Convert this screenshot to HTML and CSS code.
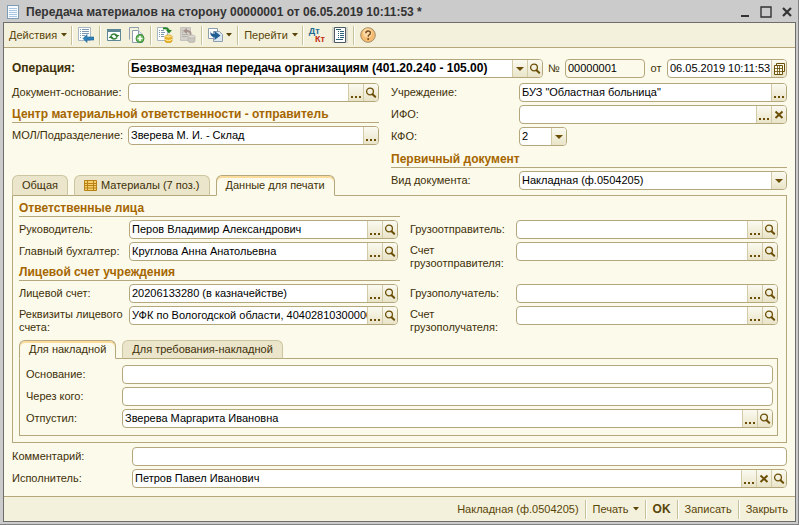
FILE: index.html
```html
<!DOCTYPE html>
<html lang="ru">
<head>
  <meta charset="UTF-8" />
  <meta name="viewport" content="width=device-width, initial-scale=1.0"/>
  <title>Передача материалов на сторону</title>
  <link rel="stylesheet" href="styles.css">
</head>
<body>
  <!-- shared glyphs for field buttons -->
  <svg class="sprite" aria-hidden="true">
    <symbol id="i-lens" viewBox="0 0 12 12">
      <circle cx="5" cy="4.5" r="3.4" fill="none" stroke="#6b4f08" stroke-width="1.3"/>
      <path d="M7.5 7.2 L10.2 9.8" stroke="#6b4f08" stroke-width="2" stroke-linecap="round"/>
    </symbol>
    <symbol id="i-dots" viewBox="0 0 12 12">
      <path d="M1 9h2v2H1zM5 9h2v2H5zM9 9h2v2H9z" fill="#6b4f08"/>
    </symbol>
    <symbol id="i-clear" viewBox="0 0 12 12">
      <path d="M2.5 2.5 L9.5 9 M9.5 2.5 L2.5 9" stroke="#6b4f08" stroke-width="2"/>
    </symbol>
    <symbol id="i-drop" viewBox="0 0 12 12">
      <path d="M2 4h8L6 8z" fill="#6b4f08"/>
    </symbol>
    <symbol id="i-calendar" viewBox="0 0 12 12">
      <path d="M3.5 .5h8v8h-8z" fill="#fcfaeb" stroke="#6b4f08"/>
      <path d="M1.5 2.5h8v9h-8z" fill="#fcfaeb" stroke="#6b4f08"/>
      <path d="M1.5 5.5h8M1.5 8.5h8M4.5 2.5v9M6.5 2.5v9" stroke="#6b4f08" stroke-width=".8"/>
    </symbol>
    <symbol id="i-caret" viewBox="0 0 6 4">
      <path d="M0 0h6L3 3.5z" fill="#5a4508"/>
    </symbol>
  </svg>

  <div class="window">
    <header class="titlebar">
      <svg class="doc" width="14" height="14" viewBox="0 0 14 14">
        <rect x="1.5" y=".5" width="11" height="13" fill="#f7fbff" stroke="#7f9cb5"/>
        <path d="M3 3.5h8M3 5.5h8M3 7.5h8M3 9.5h8M3 11.5h8" stroke="#a9c7e2"/>
      </svg>
      <h1>Передача материалов на сторону 00000001 от 06.05.2019 10:11:53 *</h1>
      <div class="win-controls">
        <button aria-label="Свернуть"><svg width="10" height="12" viewBox="0 0 10 12"><path d="M1 10h8" stroke="#333" stroke-width="2"/></svg></button>
        <button aria-label="Развернуть"><svg width="12" height="12" viewBox="0 0 12 12"><path d="M1 1h10v10H1z" fill="none" stroke="#333" stroke-width="1.4"/></svg></button>
        <button aria-label="Закрыть окно"><svg width="10" height="12" viewBox="0 0 10 12"><path d="M1 2 L9 10 M9 2 L1 10" stroke="#333" stroke-width="2.2"/></svg></button>
      </div>
    </header>

    <div class="frame">
      <nav class="toolbar">
        <button>Действия <svg class="caret"><use href="#i-caret"/></svg></button>
        <span class="sep"></span>
        <button class="tool" aria-label="Перейти к списку">
          <svg width="16" height="16" viewBox="0 0 16 16">
            <path d="M.5 .5h12v13H.5z" fill="#fff" stroke="#a9b8c4"/>
            <path d="M2 2.5h1M4 2.5h7M2 4.5h1M4 4.5h7M2 6.5h1M4 6.5h7M2 8.5h1M4 8.5h3M2 10.5h1" stroke="#7f98ad"/>
            <path d="M5 11.5l4-4V10h7v3H9v2.5z" fill="#2f7fb8" stroke="#1f6497" stroke-width=".6"/>
          </svg>
        </button>
        <span class="sep"></span>
        <button class="tool" aria-label="Перечитать">
          <svg width="16" height="16" viewBox="0 0 16 16">
            <path d="M1.5 2.5h13v11h-13z" fill="#fbfdff" stroke="#5d8795"/>
            <path d="M1 2h14v3H1z" fill="#5d8795"/>
            <path d="M5 8.5q3-3 6 0M11 10.5q-3 3-6 0" fill="none" stroke="#2f7d2f" stroke-width="1.6"/>
            <path d="M8.5 8h5L11 10.5zM2.5 11h5L5 8.5z" fill="#2f7d2f"/>
          </svg>
        </button>
        <button class="tool" aria-label="Скопировать">
          <svg width="16" height="16" viewBox="0 0 16 16">
            <path d="M.5 12.5V.5h9v2" fill="none" stroke="#8d9fae"/>
            <path d="M3.5 3.5h6l4 4v8h-10z" fill="#fff" stroke="#8d9fae"/>
            <path d="M9.5 3.5v4h4" fill="#dde7ee" stroke="#8d9fae"/>
            <circle cx="11" cy="11.5" r="4" fill="#6fbb62" stroke="#3b8a38"/>
            <path d="M11 9v5M8.5 11.5h5" stroke="#fff" stroke-width="1.6"/>
          </svg>
        </button>
        <span class="sep"></span>
        <button class="tool" aria-label="Провести">
          <svg width="16" height="16" viewBox="0 0 16 16">
            <path d="M.5 .5h10v13H.5z" fill="#fff" stroke="#a9b8c4"/>
            <path d="M2 3.5h1M4 3.5h3M2 5.5h1M4 5.5h4M2 7.5h1M4 7.5h3M2 9.5h1M4 9.5h3" stroke="#7f98ad"/>
            <path d="M6 1.500q5-1 6 2.500" fill="none" stroke="#27862b" stroke-width="1.8"/>
            <path d="M9 3h6l-3 3.5z" fill="#27862b"/>
            <path d="M8 9.5v4.500a3.500 1.500 0 0 0 7 0V9.500z" fill="#f0b729" stroke="#c98a12" stroke-width=".7"/>
            <path d="M8 12a3.500 1.500 0 0 0 7 0" fill="none" stroke="#fff0a8"/>
            <ellipse cx="11.5" cy="9.5" rx="3.5" ry="1.5" fill="#ffe37a" stroke="#d59a1b" stroke-width=".7"/>
          </svg>
        </button>
        <button class="tool" aria-label="Отменить проведение" disabled>
          <svg width="16" height="16" viewBox="0 0 16 16">
            <path d="M.5 .5h10v13H.5z" fill="#d3d0ca" stroke="#c6c3bc"/>
            <path d="M2 3.5h1M2 5.5h1M2 7.5h6M2 9.5h5" stroke="#b5b2ab"/>
            <path d="M10.5 8q1-4-4-4" fill="none" stroke="#a6938e" stroke-width="1.8"/>
            <path d="M7 1v6L3 4z" fill="#a6938e"/>
            <path d="M8 9.500v4.500a3.500 1.500 0 0 0 7 0V9.500z" fill="#c9c6be" stroke="#b3b0a8" stroke-width=".7"/>
            <ellipse cx="11.5" cy="9.5" rx="3.5" ry="1.5" fill="#dedbd4" stroke="#b3b0a8" stroke-width=".7"/>
          </svg>
        </button>
        <span class="sep"></span>
        <button class="tool with-caret" aria-label="Ввести на основании">
          <svg width="16" height="16" viewBox="0 0 16 16">
            <path d="M.5 1.5h9v10h-9z" fill="#fff" stroke="#8d9fae"/>
            <path d="M5.5 4.5h6l3 3v7h-9z" fill="#dbe7f1" stroke="#8d9fae"/>
            <path d="M2.500 4q0 3 4 3V4l6 4.500-6 4.500v-3q-5 0-4-6z" fill="#1f5f92"/>
          </svg>
          <svg class="caret"><use href="#i-caret"/></svg>
        </button>
        <span class="sep"></span>
        <button>Перейти <svg class="caret"><use href="#i-caret"/></svg></button>
        <span class="sep"></span>
        <button class="tool dtkt" aria-label="Дебет, кредит"><span class="dt">Дт</span><span class="kt">Кт</span></button>
        <button class="tool pressed" aria-label="Структура">
          <svg width="16" height="16" viewBox="0 0 16 16">
            <path d="M2.5 .5h11v15h-11z" fill="#fff" stroke="#4b5a66"/>
            <path d="M4 2.5h5M6 4.5h1M8 4.5h4M6 6.5h1M8 6.5h4M6 8.5h1M8 8.5h4M6 10.5h1M8 10.5h4M4 12.5h7" stroke="#2c6076"/>
          </svg>
        </button>
        <span class="sep"></span>
        <button class="tool" aria-label="Справка">
          <svg width="16" height="16" viewBox="0 0 16 16">
            <circle cx="8" cy="8" r="7.3" fill="#f6bd72" stroke="#a58c66"/>
            <circle cx="7.5" cy="6" r="4.5" fill="#fbd9a4"/>
            <path d="M5.8 6.3q0-2.3 2.3-2.3t2.3 1.9q0 1.2-1.2 1.9Q8.2 8.5 8.2 9.8" fill="none" stroke="#7a4b1c" stroke-width="1.4"/>
            <circle cx="8.2" cy="12" r="1" fill="#7a4b1c"/>
          </svg>
        </button>
      </nav>

      <main class="form">
        <div class="row operation">
          <label class="strong" for="operation">Операция:</label>
          <div class="field grow">
            <select id="operation" class="strong"><option>Безвозмездная передача организациям (401.20.240 - 105.00)</option></select>
            <span class="drop"><svg><use href="#i-drop"/></svg></span>
            <button aria-label="Открыть"><svg><use href="#i-lens"/></svg></button>
          </div>
          <label for="number">№</label>
          <div class="field number"><input id="number" type="text" value="00000001" readonly></div>
          <label for="date">от</label>
          <div class="field date">
            <input id="date" type="text" value="06.05.2019 10:11:53">
            <button aria-label="Выбрать дату"><svg><use href="#i-calendar"/></svg></button>
          </div>
        </div>

        <div class="head">
          <div class="head-left">
            <div class="row">
              <label for="base">Документ-основание:</label>
              <div class="field grow">
                <input id="base" type="text">
                <button aria-label="Выбрать"><svg><use href="#i-dots"/></svg></button>
                <button aria-label="Открыть"><svg><use href="#i-lens"/></svg></button>
              </div>
            </div>
            <h2>Центр материальной ответственности - отправитель</h2>
            <div class="row">
              <label for="mol">МОЛ/Подразделение:</label>
              <div class="field grow">
                <input id="mol" type="text" value="Зверева М. И. - Склад">
                <button aria-label="Выбрать"><svg><use href="#i-dots"/></svg></button>
              </div>
            </div>
            <div class="tabs">
              <button class="tab">Общая</button>
              <button class="tab">
                <svg width="13" height="11" viewBox="0 0 13 11">
                  <path d="M.5 .5h12v10H.5z" fill="#f6cf6a" stroke="#b98216"/>
                  <path d="M.5 3.5h12M.5 5.5h12M.5 8h12M3.5 .5v10M9.5 .5v10" stroke="#b98216"/>
                </svg>
                Материалы (7 поз.)
              </button>
              <button class="tab active">Данные для печати</button>
            </div>
          </div>

          <div class="head-right">
            <div class="row">
              <label for="org">Учреждение:</label>
              <div class="field grow">
                <input id="org" type="text" value='БУЗ "Областная больница"'>
                <button aria-label="Выбрать"><svg><use href="#i-dots"/></svg></button>
              </div>
            </div>
            <div class="row">
              <label for="ifo">ИФО:</label>
              <div class="field grow">
                <input id="ifo" type="text">
                <button aria-label="Выбрать"><svg><use href="#i-dots"/></svg></button>
                <button aria-label="Очистить"><svg><use href="#i-clear"/></svg></button>
              </div>
            </div>
            <div class="row">
              <label for="kfo">КФО:</label>
              <div class="field kfo">
                <select id="kfo"><option>2</option></select>
                <span class="drop"><svg><use href="#i-drop"/></svg></span>
              </div>
            </div>
            <h2>Первичный документ</h2>
            <div class="row">
              <label for="kind">Вид документа:</label>
              <div class="field grow">
                <select id="kind"><option>Накладная (ф.0504205)</option></select>
                <span class="drop"><svg><use href="#i-drop"/></svg></span>
              </div>
            </div>
          </div>
        </div>

        <section class="panel">
          <div class="print-data">
            <h2>Ответственные лица</h2>
            <div class="row left">
              <label for="chief">Руководитель:</label>
              <div class="field grow">
                <input id="chief" type="text" value="Перов Владимир Александрович">
                <button aria-label="Выбрать"><svg><use href="#i-dots"/></svg></button>
                <button aria-label="Открыть"><svg><use href="#i-lens"/></svg></button>
              </div>
            </div>
            <div class="row">
              <label for="sender">Грузоотправитель:</label>
              <div class="field grow">
                <input id="sender" type="text">
                <button aria-label="Выбрать"><svg><use href="#i-dots"/></svg></button>
                <button aria-label="Открыть"><svg><use href="#i-lens"/></svg></button>
              </div>
            </div>
            <div class="row left">
              <label for="accountant">Главный бухгалтер:</label>
              <div class="field grow">
                <input id="accountant" type="text" value="Круглова Анна Анатольевна">
                <button aria-label="Выбрать"><svg><use href="#i-dots"/></svg></button>
                <button aria-label="Открыть"><svg><use href="#i-lens"/></svg></button>
              </div>
            </div>
            <div class="row">
              <label class="two-line" for="sender-acc">Счет грузоотправителя:</label>
              <div class="field grow">
                <input id="sender-acc" type="text">
                <button aria-label="Выбрать"><svg><use href="#i-dots"/></svg></button>
                <button aria-label="Открыть"><svg><use href="#i-lens"/></svg></button>
              </div>
            </div>
            <h2>Лицевой счет учреждения</h2>
            <div class="row left">
              <label for="account">Лицевой счет:</label>
              <div class="field grow">
                <input id="account" type="text" value="20206133280 (в казначействе)">
                <button aria-label="Выбрать"><svg><use href="#i-dots"/></svg></button>
                <button aria-label="Открыть"><svg><use href="#i-lens"/></svg></button>
              </div>
            </div>
            <div class="row">
              <label for="receiver">Грузополучатель:</label>
              <div class="field grow">
                <input id="receiver" type="text">
                <button aria-label="Выбрать"><svg><use href="#i-dots"/></svg></button>
                <button aria-label="Открыть"><svg><use href="#i-lens"/></svg></button>
              </div>
            </div>
            <div class="row left">
              <label class="two-line" for="details">Реквизиты лицевого счета:</label>
              <div class="field grow">
                <input id="details" type="text" value="УФК по Вологодской области, 40402810300000000001">
                <button aria-label="Выбрать"><svg><use href="#i-dots"/></svg></button>
                <button aria-label="Открыть"><svg><use href="#i-lens"/></svg></button>
              </div>
            </div>
            <div class="row">
              <label class="two-line" for="receiver-acc">Счет грузополучателя:</label>
              <div class="field grow">
                <input id="receiver-acc" type="text">
                <button aria-label="Выбрать"><svg><use href="#i-dots"/></svg></button>
                <button aria-label="Открыть"><svg><use href="#i-lens"/></svg></button>
              </div>
            </div>
          </div>

          <div class="tabs inner-tabs">
            <button class="tab active">Для накладной</button>
            <button class="tab">Для требования-накладной</button>
          </div>
          <div class="panel inner">
            <div class="row">
              <label for="reason">Основание:</label>
              <div class="field grow"><input id="reason" type="text"></div>
            </div>
            <div class="row">
              <label for="through">Через кого:</label>
              <div class="field grow"><input id="through" type="text"></div>
            </div>
            <div class="row">
              <label for="released">Отпустил:</label>
              <div class="field grow">
                <input id="released" type="text" value="Зверева Маргарита Ивановна">
                <button aria-label="Выбрать"><svg><use href="#i-dots"/></svg></button>
                <button aria-label="Открыть"><svg><use href="#i-lens"/></svg></button>
              </div>
            </div>
          </div>
        </section>

        <div class="bottom">
          <div class="row">
            <label for="comment">Комментарий:</label>
            <div class="field grow"><input id="comment" type="text"></div>
          </div>
          <div class="row">
            <label for="executor">Исполнитель:</label>
            <div class="field grow">
              <input id="executor" type="text" value="Петров Павел Иванович">
              <button aria-label="Выбрать"><svg><use href="#i-dots"/></svg></button>
              <button aria-label="Очистить"><svg><use href="#i-clear"/></svg></button>
              <button aria-label="Открыть"><svg><use href="#i-lens"/></svg></button>
            </div>
          </div>
        </div>
      </main>

      <footer class="actions">
        <button>Накладная (ф.0504205)</button>
        <span class="sep"></span>
        <button>Печать <svg class="caret"><use href="#i-caret"/></svg></button>
        <span class="sep"></span>
        <button class="ok">OK</button>
        <span class="sep"></span>
        <button>Записать</button>
        <span class="sep"></span>
        <button>Закрыть</button>
      </footer>
    </div>
  </div>
</body>
</html>
```
FILE: styles.css
```css
* {
  box-sizing: border-box;
}

body {
  margin: 0;
  font-family: "Liberation Sans", Arial, sans-serif;
  font-size: 11px;
  line-height: 13px;
  color: #403008;
}

button, input, select {
  font: inherit;
  color: inherit;
  margin: 0;
  padding: 0;
  border: none;
  background: none;
}

.sprite {
  position: absolute;
  width: 0;
  height: 0;
}

.window {
  display: flex;
  flex-direction: column;
  min-height: 100vh;
  padding: 0 2px 2px 3px;
  background: #cbcbcb;
  border-right: 1px solid #808080;
  border-bottom: 1px solid #808080;
}

.titlebar {
  display: flex;
  align-items: center;
  height: 22px;
  padding: 2px 4px 0 3px;
}

h1 {
  flex: 1;
  margin: 0 0 0 6px;
  font-size: 12px;
  color: #333;
  white-space: nowrap;
}

.win-controls {
  display: flex;
  gap: 10px;
}

.win-controls button, .toolbar button, .actions button {
  display: flex;
  align-items: center;
}

.frame {
  flex: 1;
  display: flex;
  flex-direction: column;
  border: 1px solid #6e6e6e;
  background: #fcfaeb;
}

/* toolbar */
.toolbar {
  display: flex;
  align-items: center;
  height: 25px;
  padding: 0 5px;
  background: #f3f1dc;
  border-bottom: 1px solid #b3a77b;
}

.toolbar button, .actions button {
  color: #5a4508;
  gap: 4px;
  margin-right: 4px;
  white-space: nowrap;
}

.toolbar .tool {
  margin-right: 5px;
}

.toolbar .tool + .tool {
  margin-left: 2px;
}

.toolbar .with-caret {
  gap: 2px;
}

.sep {
  width: 2px;
  height: 19px;
  margin-right: 5px;
  background: linear-gradient(to right, #c9c19c 50%, #fff 50%);
}

.caret {
  width: 6px;
  height: 4px;
}

.toolbar .dtkt {
  width: 16px;
  height: 17px;
  flex-direction: column;
  align-items: stretch;
  gap: 0;
  font-size: 9px;
  font-weight: bold;
  line-height: 8px;
}

.dt {
  color: #1d6a94;
  text-align: left;
}

.kt {
  color: #c22a12;
  text-align: right;
}

.pressed {
  background: #d8d6cb;
}

/* form */
.form {
  flex: 1;
  padding: 11px 8px 8px;
}

h2 {
  margin: 0;
  height: 18px;
  padding-top: 2px;
  font-size: 12px;
  line-height: 14px;
  color: #a56600;
  border-bottom: 1px solid #b3a77b;
  white-space: nowrap;
}

.strong {
  font-size: 12px;
  font-weight: bold;
}

.row {
  display: flex;
  align-items: center;
  height: 19px;
}

.row label {
  flex: none;
  width: 116px;
  white-space: nowrap;
}

.row .two-line {
  align-self: flex-start;
  padding-top: 2px;
  white-space: normal;
}

.grow {
  flex: 1;
}

.field {
  display: flex;
  min-width: 0;
  height: 19px;
  background: #fff;
  border: 1px solid #b3a77b;
  border-radius: 4px;
  overflow: hidden;
  color: #000;
}

.field input, .field select {
  flex: 1;
  min-width: 0;
  width: 0;
  padding-left: 2px;
  outline: none;
  appearance: none;
}

.field select {
  margin-right: -15px;
}

.field button, .drop {
  display: flex;
  flex: none;
  align-items: center;
  justify-content: center;
  width: 15px;
  border-left: 1px solid #d3cba8;
  background: linear-gradient(#fbfaf1, #e9e4c8);
}

.field button svg, .drop svg {
  width: 12px;
  height: 12px;
}

.drop {
  pointer-events: none;
}

.operation label:not(.strong) {
  width: 22px;
  text-align: center;
}

.number {
  width: 80px;
  background: #fcfaeb;
}

.date {
  width: 120px;
}

.head {
  display: grid;
  grid-template-columns: 367fr 396fr;
  gap: 12px;
  padding-top: 5px;
}

.head-left, .head-right {
  display: flex;
  flex-direction: column;
  gap: 3px;
  min-width: 0;
}

.head-right {
  padding-bottom: 5px;
}

.head-right label {
  width: 128px;
}

.head-right h2 {
  height: 19px;
  padding-top: 3px;
}

.kfo {
  width: 48px;
}

/* tabs */
.tabs {
  display: flex;
  gap: 6px;
  margin: auto 0 -1px;
}

.tab {
  display: flex;
  align-items: center;
  gap: 4px;
  height: 21px;
  padding: 0 9px;
  background: #ebe5cb;
  border: 1px solid #cdc5a0;
  border-bottom-color: #b3a77b;
  border-radius: 6px 6px 0 0;
  white-space: nowrap;
}

.tab.active {
  position: relative;
  background: #fcfaeb;
  border-color: #b3a77b;
  border-bottom-color: #fcfaeb;
  box-shadow: inset 0 2px #fbdc9c;
}

.panel {
  padding: 4px 8px 6px 6px;
  border: 1px solid #b3a77b;
}

.print-data {
  display: grid;
  grid-template-columns: 381fr 368fr;
  column-gap: 10px;
  row-gap: 3px;
}

.print-data h2 {
  grid-column: 1;
  height: 17px;
  padding-top: 1px;
}

.print-data .left {
  grid-column: 1;
  padding-right: 2px;
}

.print-data label {
  width: 110px;
}

.print-data .row:not(.left) label {
  width: 106px;
}

.inner-tabs {
  margin-top: 15px;
}

.inner-tabs .tab {
  height: 19px;
}

.inner {
  display: flex;
  flex-direction: column;
  gap: 3px;
  padding: 6px 4px 7px 6px;
}

.inner label {
  width: 96px;
}

.bottom {
  display: flex;
  flex-direction: column;
  gap: 3px;
  padding-top: 4px;
}

.bottom label {
  width: 120px;
}

/* bottom buttons */
.actions {
  display: flex;
  align-items: center;
  justify-content: flex-end;
  height: 25px;
  padding: 0 7px;
  background: #f3f1dc;
  border-top: 1px solid #b3a77b;
}

.actions button {
  margin: 0;
}

.actions .sep {
  margin: 0 6px;
}

.actions .ok {
  font-size: 12px;
  font-weight: bold;
}
```
